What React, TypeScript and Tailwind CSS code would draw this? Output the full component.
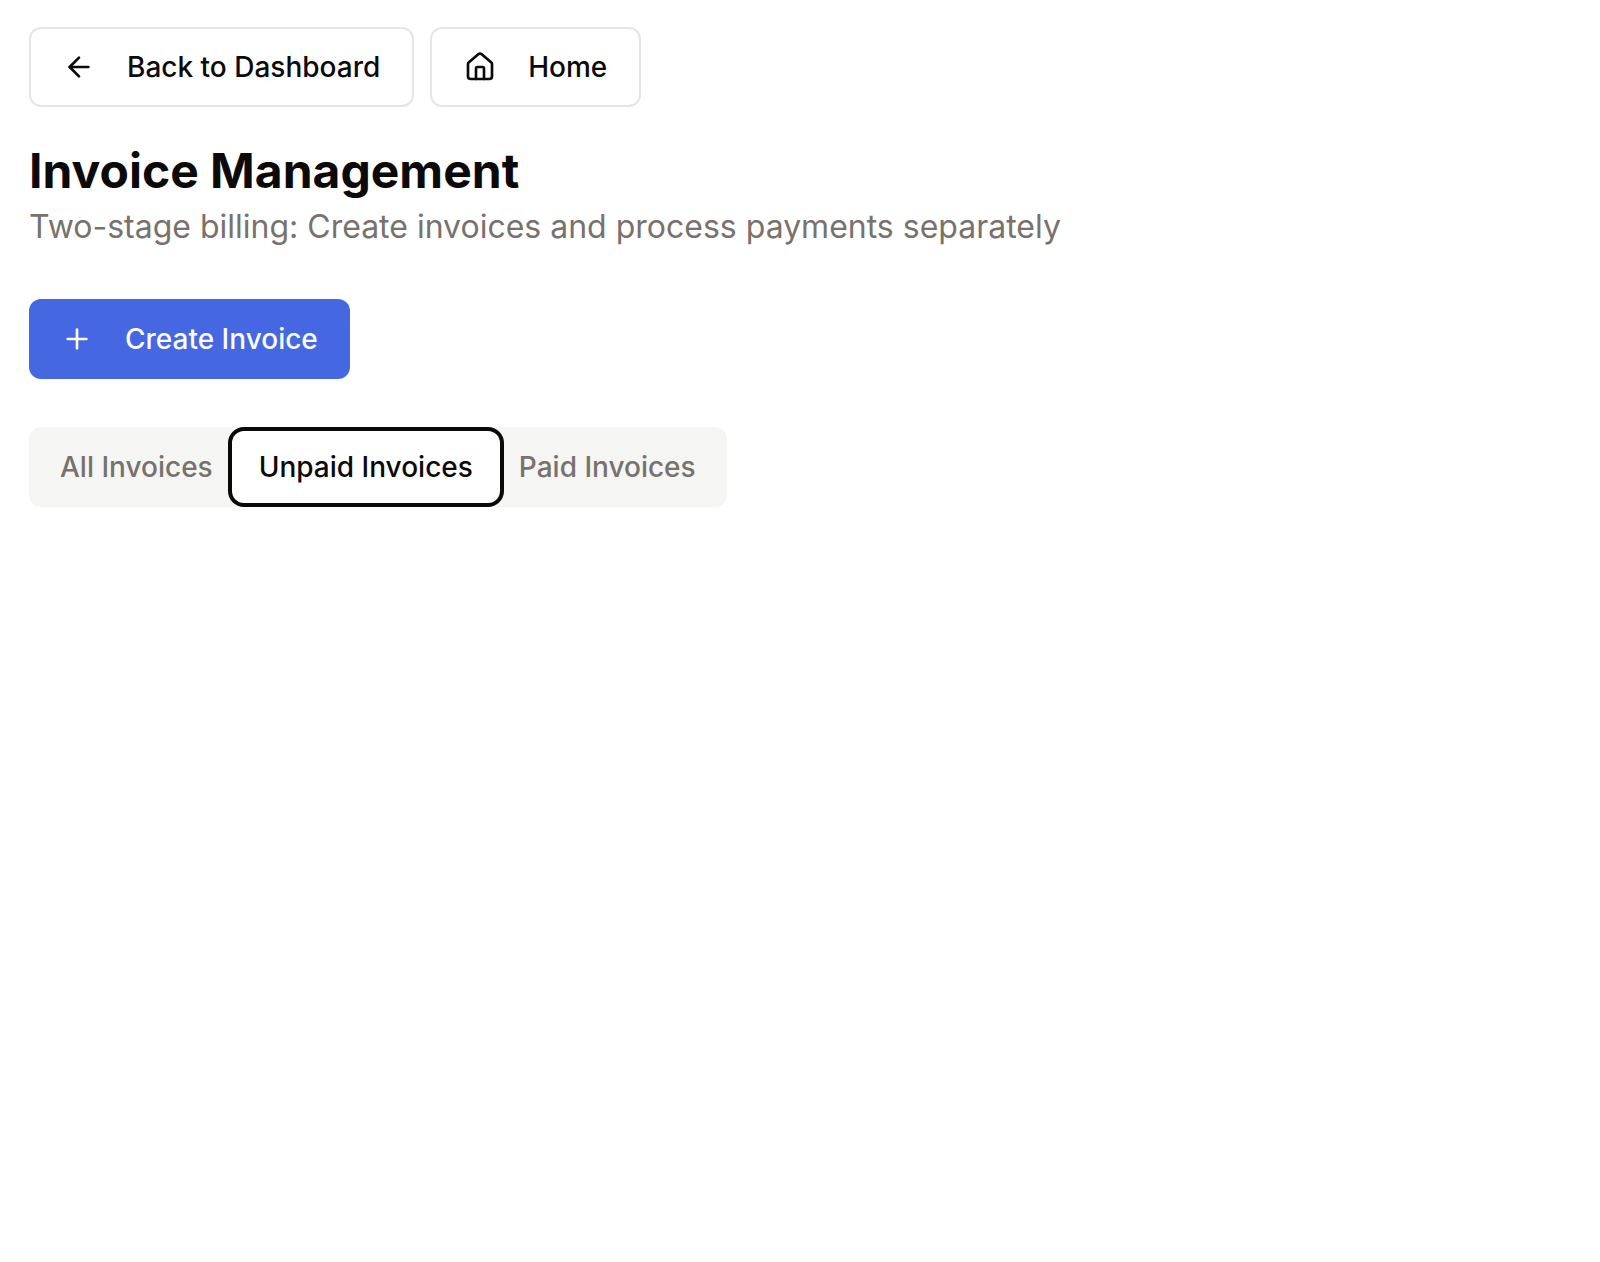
import { useState } from "react";
import { ArrowLeft, House, Plus } from "lucide-react";

const tabs = ["All Invoices", "Unpaid Invoices", "Paid Invoices"];

export default function App() {
  const [active, setActive] = useState("Unpaid Invoices");
  return (
    <main className="min-h-screen bg-white px-[29px] pt-[27px] font-['Inter',sans-serif] text-[#0c0a09]">
      <nav className="flex gap-4">
        <button className="flex h-20 items-center gap-8 rounded-xl border-2 border-[#e5e5e5] px-8 text-[28px] font-medium">
          <ArrowLeft className="size-8" strokeWidth={2} />
          Back to Dashboard
        </button>
        <button className="flex h-20 items-center gap-8 rounded-xl border-2 border-[#e5e5e5] px-8 text-[28px] font-medium">
          <House className="size-8" strokeWidth={2} />
          Home
        </button>
      </nav>
      <header className="mt-8">
        <h1 className="text-[48px] leading-[64px] font-bold">Invoice Management</h1>
        <p className="text-[32px] leading-[48px] text-[#78716c]">
          Two-stage billing: Create invoices and process payments separately
        </p>
      </header>
      <button className="mt-12 flex h-20 items-center gap-8 rounded-xl bg-[#4567e2] px-8 text-[28px] font-medium text-[#fafaf9]">
        <Plus className="size-8" strokeWidth={2} />
        Create Invoice
      </button>
      <div role="tablist" className="mt-12 inline-flex h-20 items-center rounded-xl bg-[#f5f5f4] p-2">
        {tabs.map((tab) => (
          <button
            key={tab}
            role="tab"
            aria-selected={tab === active}
            onClick={() => setActive(tab)}
            className={
              tab === active
                ? "relative h-16 rounded-lg bg-white px-[23px] text-[28px] font-medium text-[#0c0a09] ring-4 ring-[#0c0a09] ring-offset-4 ring-offset-white outline-none"
                : "h-16 rounded-lg px-[23px] text-[28px] font-medium text-[#78716c] outline-none"
            }
          >
            {tab}
          </button>
        ))}
      </div>
    </main>
  );
}
